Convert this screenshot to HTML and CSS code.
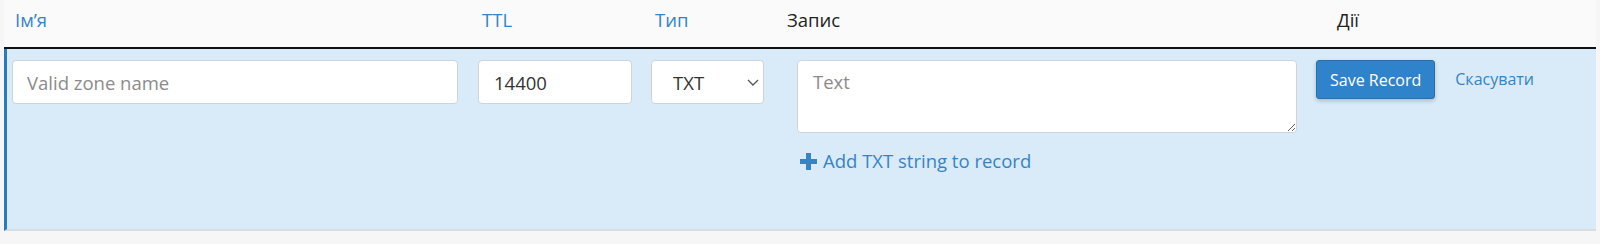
FILE: index.html
```html
<!DOCTYPE html>
<html lang="uk">
<head>
  <meta charset="UTF-8" />
  <meta name="viewport" content="width=device-width, initial-scale=1.0" />
  <title>Zone Editor</title>
  <link rel="stylesheet" href="styles.css">
</head>
<body>
  <div class="zone-table">
    <!-- Column headers -->
    <div class="table-head">
      <div class="th th-name"><a href="#" class="sort-link">Ім’я</a></div>
      <div class="th"><a href="#" class="sort-link">TTL</a></div>
      <div class="th"><a href="#" class="sort-link">Тип</a></div>
      <div class="th th-record">Запис</div>
      <div class="th th-actions">Дії</div>
    </div>

    <!-- Editable record row -->
    <div class="record-row">
      <div class="td td-name">
        <input type="text" class="form-control" placeholder="Valid zone name" />
      </div>
      <div class="td">
        <input type="text" class="form-control ttl-input" value="14400" />
      </div>
      <div class="td">
        <div class="select-wrap">
          <select class="form-control type-select">
            <option>TXT</option>
            <option>A</option>
            <option>CNAME</option>
            <option>MX</option>
          </select>
          <svg class="chevron" width="12" height="7" viewBox="0 0 12 7">
            <polyline points="1,1 6,6 11,1" fill="none" stroke="#555" stroke-width="1.3" />
          </svg>
        </div>
      </div>
      <div class="td td-record">
        <textarea class="form-control record-text" placeholder="Text"></textarea>
        <a href="#" class="add-link"><span class="plus-icon"></span>Add TXT string to record</a>
      </div>
      <div class="td td-actions">
        <button class="btn-save">Save Record</button>
        <a href="#" class="cancel-link">Скасувати</a>
      </div>
    </div>
  </div>
</body>
</html>
```

FILE: styles.css
```css
/* Base */
* {
  box-sizing: border-box;
}
body {
  margin: 0;
  padding: 0 4px;
  background: #f6f6f6;
  font-family: 'Open Sans', 'Noto Sans', sans-serif;
  font-size: 18px;
  color: #222;
}
a {
  text-decoration: none;
}

/* Table layout */
.zone-table {
  background: #fafafa;
}
.table-head,
.record-row {
  display: grid;
  grid-template-columns: 463px 173px 134px 531px 1fr;
}
.table-head {
  height: 49px;
  padding-left: 3px;
  border-bottom: 2px solid #111;
}
.th {
  padding: 8px 12px 0;
  line-height: 24px;
  font-size: 18.5px;
  color: #222;
}
.th-name {
  padding-left: 8px;
}
.th-record {
  padding-left: 10px;
}
.th-actions {
  padding-left: 29px;
}
.sort-link {
  color: #3584c6;
}

/* Editing row */
.record-row {
  height: 182px;
  background: #d9eaf8;
  border-left: 3px solid #2b7bbf;
  border-bottom: 2px solid #d9dde0;
  padding-top: 11px;
}
.td {
  padding: 0 8px;
}
.td-name {
  padding-left: 5px;
}
.form-control {
  display: block;
  width: 100%;
  height: 44px;
  padding: 0 15px;
  border: 1px solid #cfd4d8;
  border-radius: 4px;
  background: #fff;
  font-family: inherit;
  font-size: 18.5px;
  color: #333;
}
.form-control::placeholder {
  color: #8b8b8b;
}
.form-control:focus {
  outline: none;
  border-color: #66afe9;
}
.td-name .form-control {
  width: 446px;
  padding-left: 14px;
}
.ttl-input {
  width: 154px;
}

/* Type select with chevron */
.select-wrap {
  position: relative;
  width: 113px;
}
.type-select {
  appearance: none;
  -webkit-appearance: none;
  padding-left: 21px;
}
.chevron {
  position: absolute;
  right: 5px;
  top: 19px;
  pointer-events: none;
}

/* Record column */
.td-record {
  padding-left: 20px;
}
.record-text {
  width: 500px;
  height: 73px;
  padding-top: 9px;
  line-height: 24px;
  resize: vertical;
}
.add-link {
  display: inline-flex;
  align-items: center;
  margin-top: 16px;
  margin-left: 3px;
  color: #3584c6;
  font-size: 18.5px;
  line-height: 24px;
}
.plus-icon {
  position: relative;
  width: 17px;
  height: 17px;
  margin-right: 6px;
}
.plus-icon::before,
.plus-icon::after {
  content: "";
  position: absolute;
  background: #3584c6;
}
.plus-icon::before {
  left: 0;
  top: 6px;
  width: 17px;
  height: 5px;
}
.plus-icon::after {
  left: 6px;
  top: 0;
  width: 5px;
  height: 17px;
}

/* Actions */
.td-actions {
  display: flex;
  align-items: flex-start;
  gap: 20px;
}
.btn-save {
  height: 39px;
  padding: 0 13px;
  background: #2f83ca;
  color: #fff;
  border: 1px solid #2a6fa9;
  border-radius: 3px;
  box-shadow: 0 2px 4px rgba(0, 0, 0, 0.2);
  font-family: inherit;
  font-size: 16px;
  cursor: pointer;
}
.btn-save:hover {
  background: #286fad;
}
.cancel-link {
  margin-top: 8px;
  color: #3584c6;
  font-size: 16px;
  line-height: 22px;
}
```
